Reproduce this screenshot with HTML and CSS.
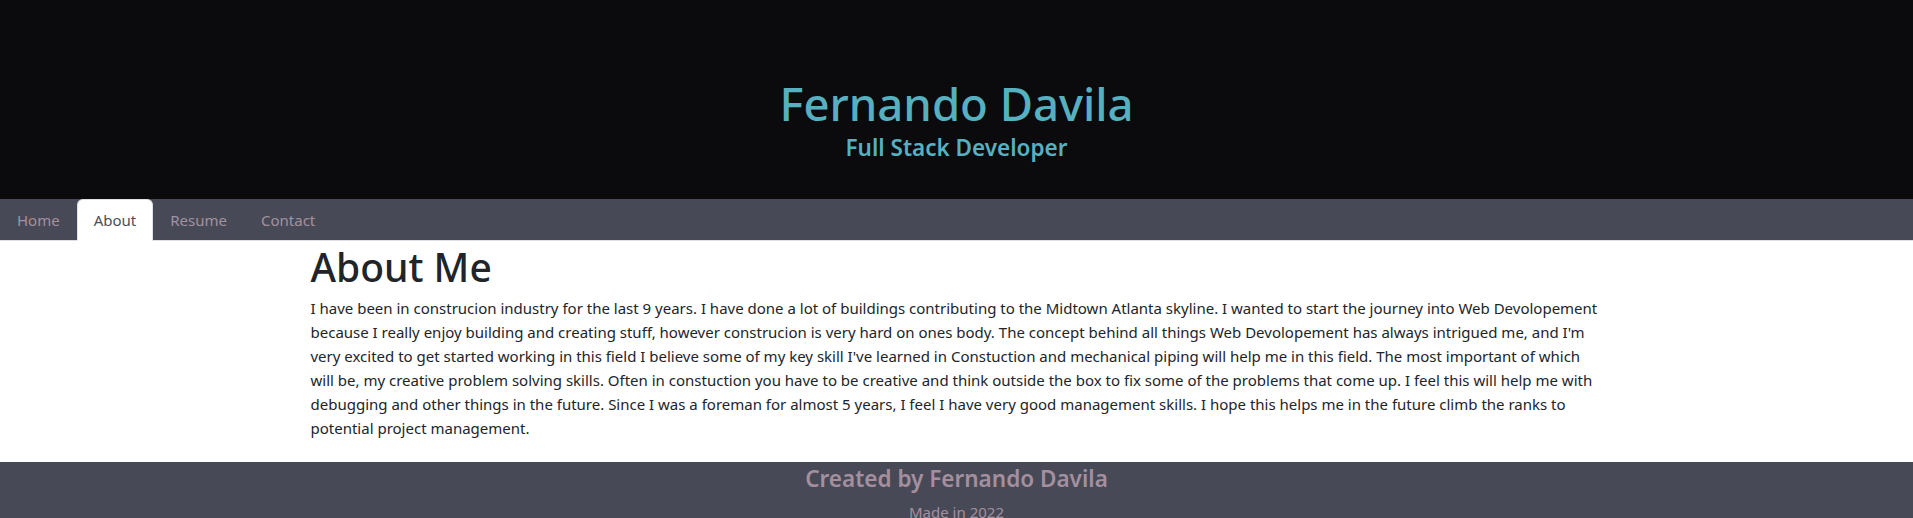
FILE: index.html
```html
<!DOCTYPE html>
<html lang="en">
<head>
<meta charset="utf-8">
<title>Fernando Davila - About</title>
<link rel="stylesheet" href="styles.css">
</head>
<body>
<header class="site-header">
  <h1 class="site-title">Fernando Davila</h1>
  <h2 class="site-subtitle">Full Stack Developer</h2>
</header>
<nav>
  <ul class="tabs">
    <li><a class="tab-link" href="#">Home</a></li>
    <li><a class="tab-link active" href="#">About</a></li>
    <li><a class="tab-link" href="#">Resume</a></li>
    <li><a class="tab-link" href="#">Contact</a></li>
  </ul>
</nav>
<main class="container">
  <h1 class="page-title">About Me</h1>
  <p class="about-text">I have been in construcion industry for the last 9 years. I have done a lot of buildings contributing to the Midtown Atlanta skyline. I wanted to start the journey into Web Devolopement because I really enjoy building and creating stuff, however construcion is very hard on ones body. The concept behind all things Web Devolopement has always intrigued me, and I'm very excited to get started working in this field I believe some of my key skill I've learned in Constuction and mechanical piping will help me in this field. The most important of which will be, my creative problem solving skills. Often in constuction you have to be creative and think outside the box to fix some of the problems that come up. I feel this will help me with debugging and other things in the future. Since I was a foreman for almost 5 years, I feel I have very good management skills. I hope this helps me in the future climb the ranks to potential project management.</p>
</main>
<footer class="site-footer">
  <h4 class="footer-title">Created by Fernando Davila</h4>
  <p class="footer-note">Made in 2022</p>
</footer>
</body>
</html>
```
FILE: styles.css
```css
*{box-sizing:border-box;}
html,body{margin:0;padding:0;}
body{
  font-family:"Noto Sans","Open Sans",sans-serif;
  font-size:15px;
  line-height:24px;
  color:#212529;
  background:#fff;
}
.site-header{
  background:#0b0a0c;
  height:199px;
  padding-top:76px;
  text-align:center;
}
.site-title{
  margin:0;
  font-size:45.5px;
  font-weight:500;
  line-height:1.2;
  color:#57b0c0;
}
.site-subtitle{
  margin:3px 0 0;
  font-size:22.5px;
  font-weight:600;
  line-height:1.2;
  color:#57b0c0;
}
.tabs{
  list-style:none;
  margin:0;
  padding:0;
  display:flex;
  background:#474a56;
  border-bottom:1px solid #dee2e6;
}
.tab-link{
  display:block;
  padding:8px 16px;
  margin-bottom:-1px;
  border:1px solid transparent;
  border-top-left-radius:6px;
  border-top-right-radius:6px;
  color:#a3919f;
  text-decoration:none;
}
.tab-link.active{
  background:#fff;
  color:#495057;
  border-color:#dee2e6 #dee2e6 #fff;
}
.container{
  max-width:1320px;
  margin:0 auto;
  padding:0 10px 6px 14px;
}
.page-title{
  margin:3px 0 5px;
  font-size:39px;
  font-weight:500;
  line-height:1.2;
  color:#212529;
}
.about-text{
  margin:0 0 16px;
}
.site-footer{
  background:#474a56;
  text-align:center;
  padding-top:3px;
}
.footer-title{
  margin:0 0 8px;
  font-size:22.5px;
  font-weight:600;
  line-height:1.2;
  color:#a48f9f;
}
.footer-note{
  margin:0;
  color:#a48f9f;
}
```
